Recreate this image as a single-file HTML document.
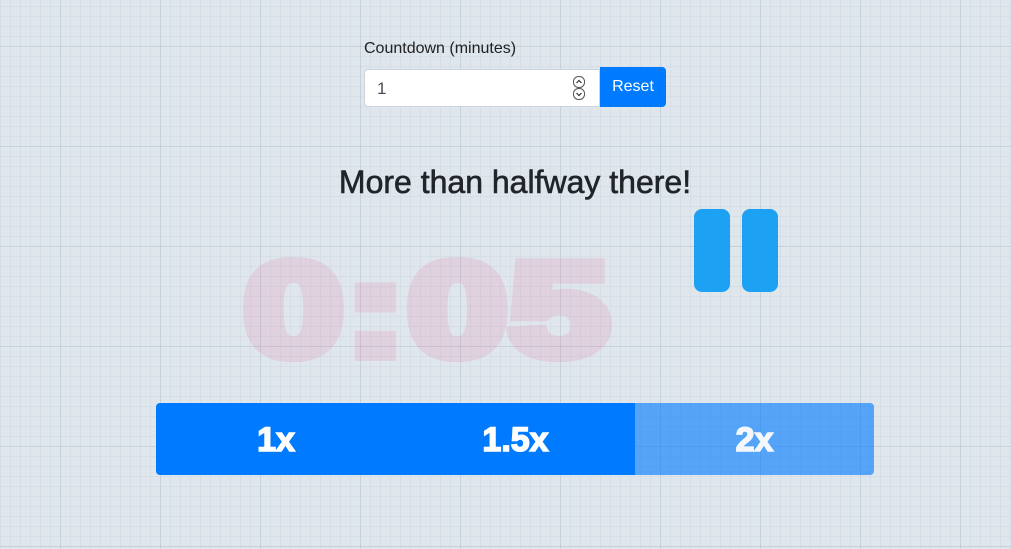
<!DOCTYPE html>
<html><head><style>
html,body{margin:0;padding:0;width:1011px;height:549px;overflow:hidden}
body{background-color:#dfe6ec;
background-image:
linear-gradient(to right,rgba(170,185,200,.35) 1px,transparent 1px),
linear-gradient(to bottom,rgba(170,185,200,.35) 1px,transparent 1px),
linear-gradient(to right,rgba(205,215,225,.45) 1px,transparent 1px),
linear-gradient(to bottom,rgba(205,215,225,.45) 1px,transparent 1px);
background-size:100px 100px,100px 100px,10px 10px,10px 10px;
background-position:60px 46px,60px 46px,0 6px,0 6px;
font-family:"Liberation Sans",sans-serif;position:relative}
.lbl{position:absolute;left:364px;top:40px;font-size:16px;color:#222}
.inp{position:absolute;left:364px;top:69px;width:236px;height:38px;background:#fff;border:1px solid #ced4da;border-radius:4px 0 0 4px;box-sizing:border-box}
.inp span{position:absolute;left:12px;top:9px;font-size:17px;color:#495057}
.spin{position:absolute;left:208px;top:6px;width:12px;height:24px}
.btn{position:absolute;left:600px;top:67px;width:66px;height:40px;background:#007bff;border-radius:0 4px 4px 0;color:#fff;font-size:16px;text-align:center;line-height:40px}
h1{position:absolute;left:0;width:1030px;text-align:center;top:164px;margin:0;font-size:32px;font-weight:normal;-webkit-text-stroke:.6px #212529;color:#212529}
.time{position:absolute;left:244px;top:244px;font-size:132px;font-weight:bold;color:rgb(225,110,150);opacity:.17;-webkit-text-stroke:12px rgb(225,110,150);transform:scaleX(1.35);transform-origin:left top;letter-spacing:2px;line-height:1}
.bar{position:absolute;top:209px;width:36px;height:83px;background:#1da1f2;border-radius:8px}
.sp{position:absolute;top:403px;height:72px;width:240px;color:#fff;font-size:34px;font-weight:bold;text-align:center;line-height:74px;-webkit-text-stroke:1.5px #fff}
</style></head><body>
<div class="lbl">Countdown (minutes)</div>
<div class="inp"><span>1</span>
<svg class="spin" viewBox="0 0 12 24"><rect x=".5" y=".5" width="11" height="11" rx="5" fill="none" stroke="#555"/><rect x=".5" y="12.5" width="11" height="11" rx="5" fill="none" stroke="#555"/><path d="M3.5 7L6 4.5 8.5 7M3.5 17L6 19.5 8.5 17" fill="none" stroke="#333" stroke-width="1.2"/></svg></div>
<div class="btn">Reset</div>
<h1>More than halfway there!</h1>
<div class="time">0:05</div>
<div class="bar" style="left:694px"></div>
<div class="bar" style="left:742px"></div>
<div class="sp" style="left:156px;border-radius:4px 0 0 4px;background:#007bff">1x</div>
<div class="sp" style="left:396px;background:#007bff;width:239px">1.5x</div>
<div class="sp" style="left:635px;width:239px;border-radius:0 4px 4px 0;background:rgba(0,123,255,.62);color:#f4f8fc;-webkit-text-stroke:1.5px #f4f8fc">2x</div>
</body></html>
